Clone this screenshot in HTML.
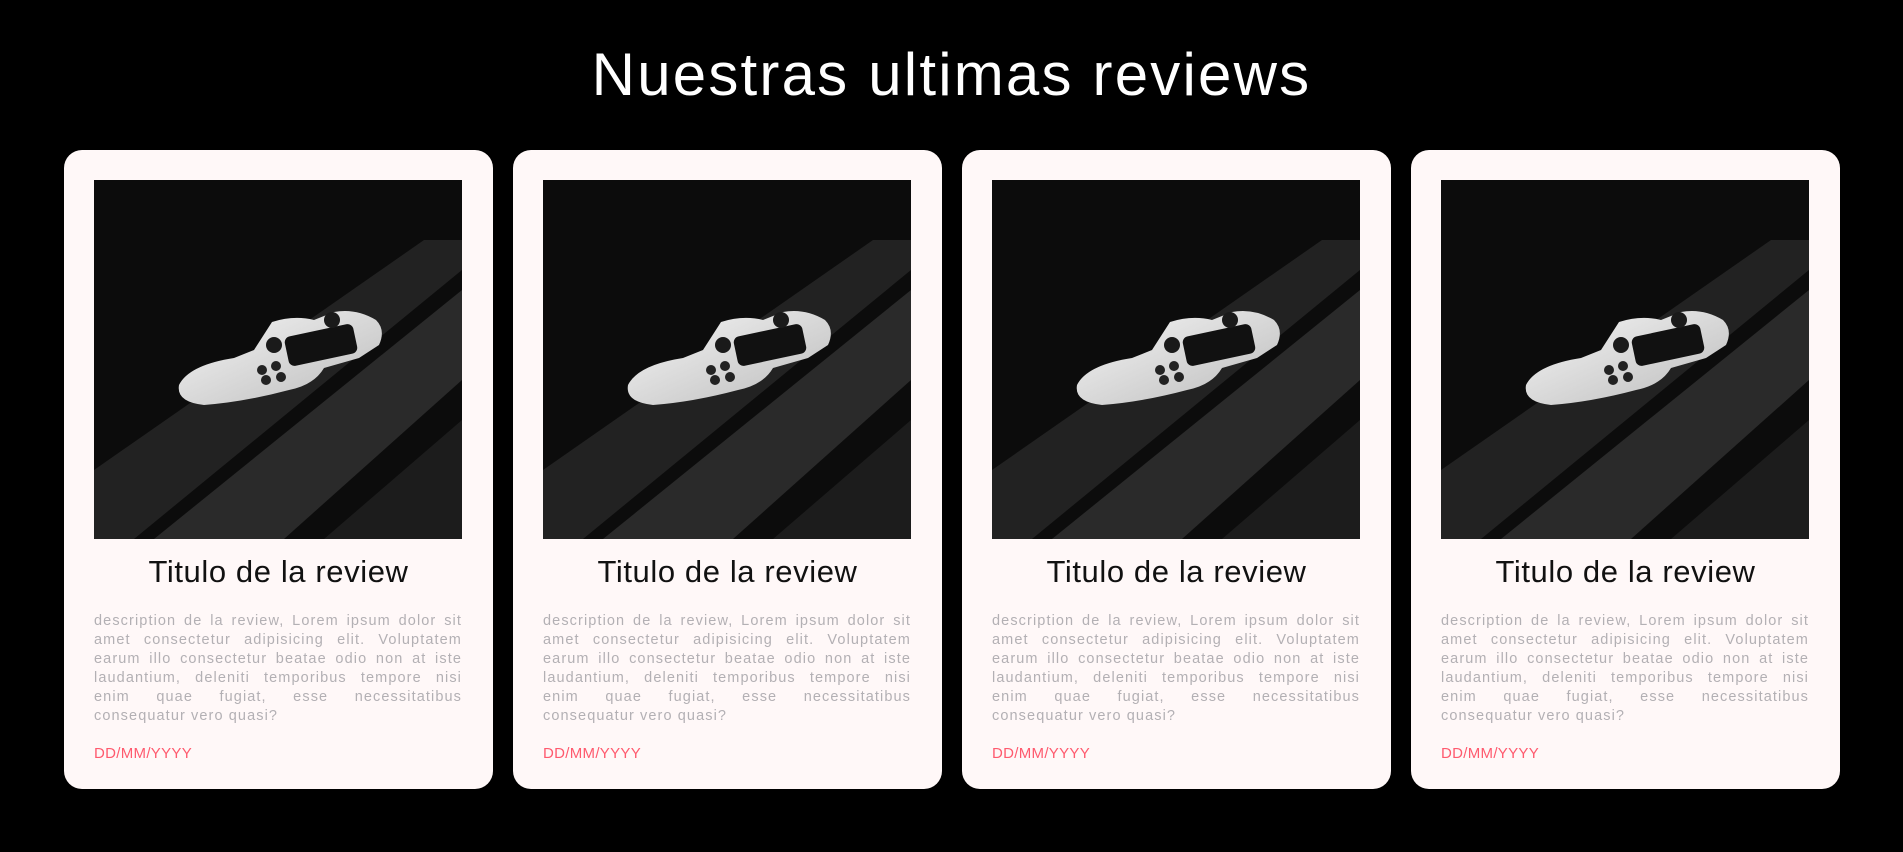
<!DOCTYPE html>
<html><head><meta charset="utf-8"><style>
body{margin:0;background:#000;width:1903px;height:852px;overflow:hidden;font-family:"Liberation Sans",sans-serif;position:relative}
.h{position:absolute;top:36px;left:0;width:1903px;text-align:center;color:#fff;font-size:60px;line-height:78px;letter-spacing:2.2px;z-index:5}
.card{position:absolute;top:150px;width:429px;height:639px;background:#fff8f8;border-radius:18px}
.img{position:absolute;left:30px;top:30px;width:368px;height:359px;overflow:hidden;background:#0a0a0a}
.t{position:absolute;top:404px;left:0;width:429px;text-align:center;font-size:31px;color:#111;letter-spacing:0.6px}
.d{position:absolute;left:30px;top:462px;width:368px;font-size:14.5px;line-height:19px;color:#b3b0b4;text-align:justify;letter-spacing:1.1px}
.dt{position:absolute;left:30px;top:595px;font-size:15px;color:#ff5a6e;letter-spacing:0.3px}
</style></head><body>
<div class="card" style="left:64px"><div class="img"><svg width="368" height="359" viewBox="0 0 368 359"><defs><linearGradient id="g1" x1="0" y1="0" x2="1" y2="1"><stop offset="0" stop-color="#f6f6f6"/><stop offset="1" stop-color="#bbb"/></linearGradient></defs><rect width="368" height="359" fill="#0c0c0c"/><polygon points="0,290 330,60 368,60 368,90 40,359 0,359" fill="#222"/><polygon points="60,359 368,110 368,200 190,359" fill="#2a2a2a"/><polygon points="230,359 368,240 368,359" fill="#1c1c1c"/><path d="M85,205 Q95,185 140,178 L160,170 L178,142 Q200,135 220,140 L240,132 Q262,128 282,140 Q292,150 285,165 L265,178 L230,188 Q220,205 195,210 Q150,222 110,225 Q82,222 85,205Z" fill="url(#g1)"/><rect x="192" y="150" width="70" height="30" rx="6" fill="#111" transform="rotate(-12 227 165)"/><circle cx="180" cy="165" r="8" fill="#1a1a1a"/><circle cx="238" cy="140" r="8" fill="#1a1a1a"/><circle cx="168" cy="190" r="5" fill="#222"/><circle cx="182" cy="186" r="5" fill="#222"/><circle cx="172" cy="200" r="5" fill="#222"/><circle cx="187" cy="197" r="5" fill="#222"/></svg></div><div class="t">Titulo de la review</div><div class="d">description de la review, Lorem ipsum dolor sit amet consectetur adipisicing elit. Voluptatem earum illo consectetur beatae odio non at iste laudantium, deleniti temporibus tempore nisi enim quae fugiat, esse necessitatibus consequatur vero quasi?</div><div class="dt">DD/MM/YYYY</div></div>
<div class="card" style="left:513px"><div class="img"><svg width="368" height="359" viewBox="0 0 368 359"><defs><linearGradient id="g2" x1="0" y1="0" x2="1" y2="1"><stop offset="0" stop-color="#f6f6f6"/><stop offset="1" stop-color="#bbb"/></linearGradient></defs><rect width="368" height="359" fill="#0c0c0c"/><polygon points="0,290 330,60 368,60 368,90 40,359 0,359" fill="#222"/><polygon points="60,359 368,110 368,200 190,359" fill="#2a2a2a"/><polygon points="230,359 368,240 368,359" fill="#1c1c1c"/><path d="M85,205 Q95,185 140,178 L160,170 L178,142 Q200,135 220,140 L240,132 Q262,128 282,140 Q292,150 285,165 L265,178 L230,188 Q220,205 195,210 Q150,222 110,225 Q82,222 85,205Z" fill="url(#g2)"/><rect x="192" y="150" width="70" height="30" rx="6" fill="#111" transform="rotate(-12 227 165)"/><circle cx="180" cy="165" r="8" fill="#1a1a1a"/><circle cx="238" cy="140" r="8" fill="#1a1a1a"/><circle cx="168" cy="190" r="5" fill="#222"/><circle cx="182" cy="186" r="5" fill="#222"/><circle cx="172" cy="200" r="5" fill="#222"/><circle cx="187" cy="197" r="5" fill="#222"/></svg></div><div class="t">Titulo de la review</div><div class="d">description de la review, Lorem ipsum dolor sit amet consectetur adipisicing elit. Voluptatem earum illo consectetur beatae odio non at iste laudantium, deleniti temporibus tempore nisi enim quae fugiat, esse necessitatibus consequatur vero quasi?</div><div class="dt">DD/MM/YYYY</div></div>
<div class="card" style="left:962px"><div class="img"><svg width="368" height="359" viewBox="0 0 368 359"><defs><linearGradient id="g3" x1="0" y1="0" x2="1" y2="1"><stop offset="0" stop-color="#f6f6f6"/><stop offset="1" stop-color="#bbb"/></linearGradient></defs><rect width="368" height="359" fill="#0c0c0c"/><polygon points="0,290 330,60 368,60 368,90 40,359 0,359" fill="#222"/><polygon points="60,359 368,110 368,200 190,359" fill="#2a2a2a"/><polygon points="230,359 368,240 368,359" fill="#1c1c1c"/><path d="M85,205 Q95,185 140,178 L160,170 L178,142 Q200,135 220,140 L240,132 Q262,128 282,140 Q292,150 285,165 L265,178 L230,188 Q220,205 195,210 Q150,222 110,225 Q82,222 85,205Z" fill="url(#g3)"/><rect x="192" y="150" width="70" height="30" rx="6" fill="#111" transform="rotate(-12 227 165)"/><circle cx="180" cy="165" r="8" fill="#1a1a1a"/><circle cx="238" cy="140" r="8" fill="#1a1a1a"/><circle cx="168" cy="190" r="5" fill="#222"/><circle cx="182" cy="186" r="5" fill="#222"/><circle cx="172" cy="200" r="5" fill="#222"/><circle cx="187" cy="197" r="5" fill="#222"/></svg></div><div class="t">Titulo de la review</div><div class="d">description de la review, Lorem ipsum dolor sit amet consectetur adipisicing elit. Voluptatem earum illo consectetur beatae odio non at iste laudantium, deleniti temporibus tempore nisi enim quae fugiat, esse necessitatibus consequatur vero quasi?</div><div class="dt">DD/MM/YYYY</div></div>
<div class="card" style="left:1411px"><div class="img"><svg width="368" height="359" viewBox="0 0 368 359"><defs><linearGradient id="g4" x1="0" y1="0" x2="1" y2="1"><stop offset="0" stop-color="#f6f6f6"/><stop offset="1" stop-color="#bbb"/></linearGradient></defs><rect width="368" height="359" fill="#0c0c0c"/><polygon points="0,290 330,60 368,60 368,90 40,359 0,359" fill="#222"/><polygon points="60,359 368,110 368,200 190,359" fill="#2a2a2a"/><polygon points="230,359 368,240 368,359" fill="#1c1c1c"/><path d="M85,205 Q95,185 140,178 L160,170 L178,142 Q200,135 220,140 L240,132 Q262,128 282,140 Q292,150 285,165 L265,178 L230,188 Q220,205 195,210 Q150,222 110,225 Q82,222 85,205Z" fill="url(#g4)"/><rect x="192" y="150" width="70" height="30" rx="6" fill="#111" transform="rotate(-12 227 165)"/><circle cx="180" cy="165" r="8" fill="#1a1a1a"/><circle cx="238" cy="140" r="8" fill="#1a1a1a"/><circle cx="168" cy="190" r="5" fill="#222"/><circle cx="182" cy="186" r="5" fill="#222"/><circle cx="172" cy="200" r="5" fill="#222"/><circle cx="187" cy="197" r="5" fill="#222"/></svg></div><div class="t">Titulo de la review</div><div class="d">description de la review, Lorem ipsum dolor sit amet consectetur adipisicing elit. Voluptatem earum illo consectetur beatae odio non at iste laudantium, deleniti temporibus tempore nisi enim quae fugiat, esse necessitatibus consequatur vero quasi?</div><div class="dt">DD/MM/YYYY</div></div>
<div class="h">Nuestras ultimas reviews</div>
</body></html>
